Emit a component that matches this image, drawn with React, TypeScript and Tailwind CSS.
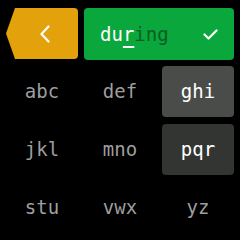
const rows = [
  ["abc", "def", "ghi"],
  ["jkl", "mno", "pqr"],
  ["stu", "vwx", "yz"],
];

const tileStyle: Record<string, string> = {
  ghi: "bg-[#4a4c4a] text-white",
  pqr: "bg-[#333533] text-white",
};

export default function App() {
  return (
    <div className="w-[240px] h-[240px] bg-black px-[6px] pt-[8px] font-['DejaVu_Sans_Mono',monospace] text-[19px]">
      <div className="flex gap-[6px] h-[52px]">
        <button
          className="w-[72px] h-[51px] bg-[#e3a20b] rounded-r-[4px] flex items-center justify-center pl-[6px]"
          style={{ clipPath: "polygon(9px 0, 100% 0, 100% 100%, 9px 100%, 0 50%)" }}
        >
          <svg width="12" height="18" viewBox="0 0 12 18" fill="none">
            <path d="M9.5 1.5 L2.5 9 L9.5 16.5" stroke="white" strokeWidth="2.2" strokeLinecap="round" strokeLinejoin="round" />
          </svg>
        </button>
        <div className="flex-1 bg-[#0aa83c] rounded-[4px] flex items-center pl-[16px] pr-[16px]">
          <span className="text-white">du</span>
          <span className="text-white underline decoration-[2px] underline-offset-[5px]">r</span>
          <span className="text-[#0b5e23]">ing</span>
          <svg className="ml-auto" width="15" height="11" viewBox="0 0 15 11" fill="none">
            <path d="M1.5 5.5 L5.5 9.5 L13.5 1.5" stroke="white" strokeWidth="2.2" strokeLinecap="round" strokeLinejoin="round" />
          </svg>
        </div>
      </div>
      <div className="grid grid-cols-3 gap-x-[6px] gap-y-[7px] mt-[6px]">
        {rows.flat().map((label) => (
          <div
            key={label}
            className={`h-[51px] rounded-[4px] flex items-center justify-center ${tileStyle[label] ?? "text-[#9e9e9e]"}`}
          >
            {label}
          </div>
        ))}
      </div>
    </div>
  );
}
